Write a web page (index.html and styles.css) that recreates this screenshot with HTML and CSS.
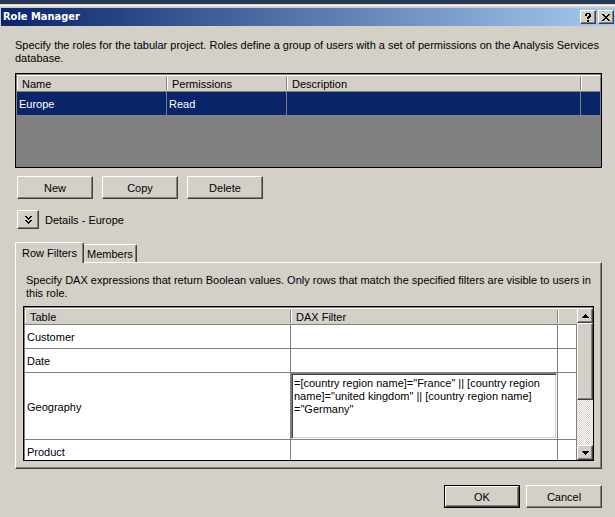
FILE: index.html
```html
<!DOCTYPE html>
<html lang="en">
<head>
<meta charset="utf-8">
<title>Role Manager</title>
<link rel="stylesheet" href="styles.css">
</head>
<body>
<main class="dialog">
  <header class="titlebar">
    <h1 class="title">Role Manager</h1>
    <button class="bevel caption-btn" type="button" aria-label="Help">
      <svg width="6" height="9" viewBox="0 0 6 9" shape-rendering="crispEdges"><path d="M1 0h4v1h1v3h-1v1h-1v1h-2v-2h1v-1h1v-2h-2v2h-2v-2h1zM2 7h2v2h-2z"/></svg>
    </button>
    <button class="bevel caption-btn" type="button" aria-label="Close">
      <svg width="8" height="7" viewBox="0 0 8 7" shape-rendering="crispEdges"><path d="M0 0h2v1h1v1h2v-1h1v-1h2v1h-1v1h-1v1h-1v1h1v1h1v1h1v1h-2v-1h-1v-1h-2v1h-1v1h-2v-1h1v-1h1v-1h1v-1h-1v-1h-1v-1h-1z"/></svg>
    </button>
  </header>
  <div class="content">
    <p class="intro">Specify the roles for the tabular project. Roles define a group of users with a set of permissions on the Analysis Services database.</p>

    <div class="grid roles">
      <table>
        <colgroup><col class="col-name"><col class="col-perm"><col><col class="col-end"></colgroup>
        <thead><tr><th>Name</th><th>Permissions</th><th>Description</th><th></th></tr></thead>
        <tbody><tr class="selected"><td>Europe</td><td>Read</td><td></td><td></td></tr></tbody>
      </table>
    </div>

    <div class="actions">
      <button class="bevel btn" type="button">New</button>
      <button class="bevel btn" type="button">Copy</button>
      <button class="bevel btn" type="button">Delete</button>
    </div>

    <div class="details">
      <button class="bevel expand" id="expand" type="button" aria-label="Toggle details">
        <svg width="7" height="8" viewBox="0 0 7 8" shape-rendering="crispEdges"><path d="M0 0h2v1h1v1h1v-1h1v-1h2v1h-1v1h-1v1h-1v1h-1v-1h-1v-1h-1v-1h-1zM0 4h2v1h1v1h1v-1h1v-1h2v1h-1v1h-1v1h-1v1h-1v-1h-1v-1h-1v-1h-1z"/></svg>
      </button>
      <label for="expand">Details - Europe</label>
    </div>

    <div class="tabs" role="tablist">
      <button class="tab active" type="button" role="tab" aria-selected="true">Row Filters</button>
      <button class="tab" type="button" role="tab" aria-selected="false">Members</button>
    </div>
    <section class="panel" role="tabpanel">
      <p class="hint">Specify DAX expressions that return Boolean values. Only rows that match the specified filters are visible to users in this role.</p>
      <div class="grid filters">
        <div class="viewport">
          <table>
            <colgroup><col class="col-table"><col><col class="col-end"></colgroup>
            <thead><tr><th>Table</th><th>DAX Filter</th><th></th></tr></thead>
            <tbody>
              <tr><td>Customer</td><td></td><td></td></tr>
              <tr><td>Date</td><td></td><td></td></tr>
              <tr><td>Geography</td><td class="editing"><textarea aria-label="DAX filter for Geography" spellcheck="false">=[country region name]="France" || [country region
name]="united kingdom" || [country region name]
="Germany"</textarea></td><td></td></tr>
              <tr><td>Product</td><td></td><td></td></tr>
            </tbody>
          </table>
        </div>
        <div class="scrollbar">
          <button class="bevel arrow" type="button" aria-label="Scroll up"><svg width="7" height="4" viewBox="0 0 7 4" shape-rendering="crispEdges"><path d="M3 0h1v1h1v1h1v1h1v1h-7v-1h1v-1h1v-1h1z"/></svg></button>
          <div class="bevel thumb"></div>
          <div class="track"></div>
          <button class="bevel arrow" type="button" aria-label="Scroll down"><svg width="7" height="4" viewBox="0 0 7 4" shape-rendering="crispEdges"><path d="M0 0h7v1h-1v1h-1v1h-1v1h-1v-1h-1v-1h-1v-1h-1z"/></svg></button>
        </div>
      </div>
    </section>

    <footer class="footer">
      <button class="default" type="submit"><span class="bevel">OK</span></button>
      <button class="bevel btn" type="button">Cancel</button>
    </footer>
  </div>
</main>
</body>
</html>
```
FILE: styles.css
```css
* { box-sizing: border-box; }
:root {
  --face: #d4d0c8;
  --shadow: #808080;
  --dark: #404040;
  --navy: #0a246a;
}
body, button, textarea, table {
  font: 11px/13px Tahoma, "Liberation Sans", sans-serif;
  color: #000;
}
body { margin: 0; background: var(--face); }
p, h1 { margin: 0; }
svg { display: block; }
button { padding: 0; border-radius: 0; background: var(--face); }

.dialog {
  min-height: 100vh;
  border-top: 4px solid #293955;
  padding: 4px 0 0 1px;
  background: var(--face);
  box-shadow: inset 0 1px var(--face), inset 0 2px #fff;
}
.titlebar {
  display: flex;
  align-items: center;
  gap: 2px;
  height: 18px;
  padding: 0 1px 0 2px;
  background: linear-gradient(to right, var(--navy), #a6caf0);
}
.title {
  flex: 1;
  font: bold 11px/18px Tahoma, "DejaVu Sans Condensed", sans-serif;
  color: #fff;
}

.bevel {
  display: flex;
  align-items: center;
  justify-content: center;
  border: 1px solid;
  border-color: #fff var(--dark) var(--dark) #fff;
  background: var(--face);
  box-shadow: inset -1px -1px var(--shadow);
}
.caption-btn { width: 16px; height: 14px; }

.content { padding: 13px 13px 9px 14px; }
.intro { margin-bottom: 8px; }

.grid { border: 1px solid #000; }
.grid table { width: 100%; table-layout: fixed; border-collapse: separate; border-spacing: 0; }
.roles { height: 95px; padding: 1px; background: var(--shadow); }
.col-name { width: 150px; }
.col-perm { width: 120px; }
.col-end { width: 19px; }
.col-table { width: 266px; }
th {
  position: relative;
  height: 17px;
  padding: 1px 5px 0;
  border-top: 1px solid #fff;
  border-bottom: 1px solid var(--shadow);
  background: var(--face);
  font-weight: normal;
  text-align: left;
}
th::before, th::after { content: ""; position: absolute; top: 1px; bottom: 1px; width: 1px; }
th::before { left: 0; background: #fff; }
th:not(:last-child)::after { right: 0; background: var(--shadow); }
td {
  height: 24px;
  padding: 2px 2px 0;
  border-right: 1px solid var(--shadow);
  border-bottom: 1px solid var(--shadow);
  background: #fff;
}
.roles td:last-child { border-right: 0; }
.selected td { background: var(--navy); color: #fff; }

.actions { display: flex; gap: 9px; margin: 8px 2px 11px; }
.btn { width: 76px; height: 23px; padding-top: 1px; }
.details { display: flex; align-items: center; gap: 6px; margin: 0 2px 13px; }
.details label { padding-top: 2px; }
.expand { width: 22px; height: 19px; }

.tabs { display: flex; align-items: flex-end; }
.tab {
  height: 18px;
  padding: 2px 3px 0;
  border: 0 solid;
  border-width: 1px 1px 0 0;
  border-color: #fff var(--dark) #fff #fff;
  border-radius: 0 2px 0 0;
  box-shadow: inset -1px 0 var(--shadow);
}
.tab.active {
  position: relative;
  height: 21px;
  margin-bottom: -1px;
  padding: 0 6px;
  border-left-width: 1px;
  border-radius: 2px 2px 0 0;
}
.panel {
  padding: 11px 7px 7px;
  border: 1px solid;
  border-color: #fff var(--dark) var(--dark) #fff;
  box-shadow: inset -1px -1px var(--shadow);
}
.hint { margin: 0 3px 6px; }
.filters { display: flex; height: 155px; background: #fff; box-shadow: inset 1px 1px var(--shadow); padding: 1px 0 0 1px; }
.viewport { flex: 1; min-width: 0; overflow: hidden; }
td.editing { padding: 0; }
textarea {
  display: block;
  width: 100%;
  height: 66px;
  padding: 3px 2px;
  border: 1px solid;
  border-color: var(--shadow) #fff #fff var(--shadow);
  border-radius: 0;
  outline: 0;
  background: #fff;
  box-shadow: inset 1px 1px var(--dark), inset -1px -1px var(--face);
  resize: none;
  overflow: hidden;
}
.scrollbar { display: flex; flex-direction: column; width: 16px; background: var(--face); }
.arrow { height: 15px; }
.thumb { height: 77px; }
.track { flex: 1; background: repeating-conic-gradient(#fff 0 25%, var(--face) 0 50%) 0 0 / 2px 2px; }

.footer { display: flex; justify-content: flex-end; gap: 6px; margin-top: 16px; }
.default { display: flex; width: 76px; height: 23px; border: 1px solid #000; }
.default .bevel { flex: 1; align-self: stretch; padding-top: 1px; }
```
